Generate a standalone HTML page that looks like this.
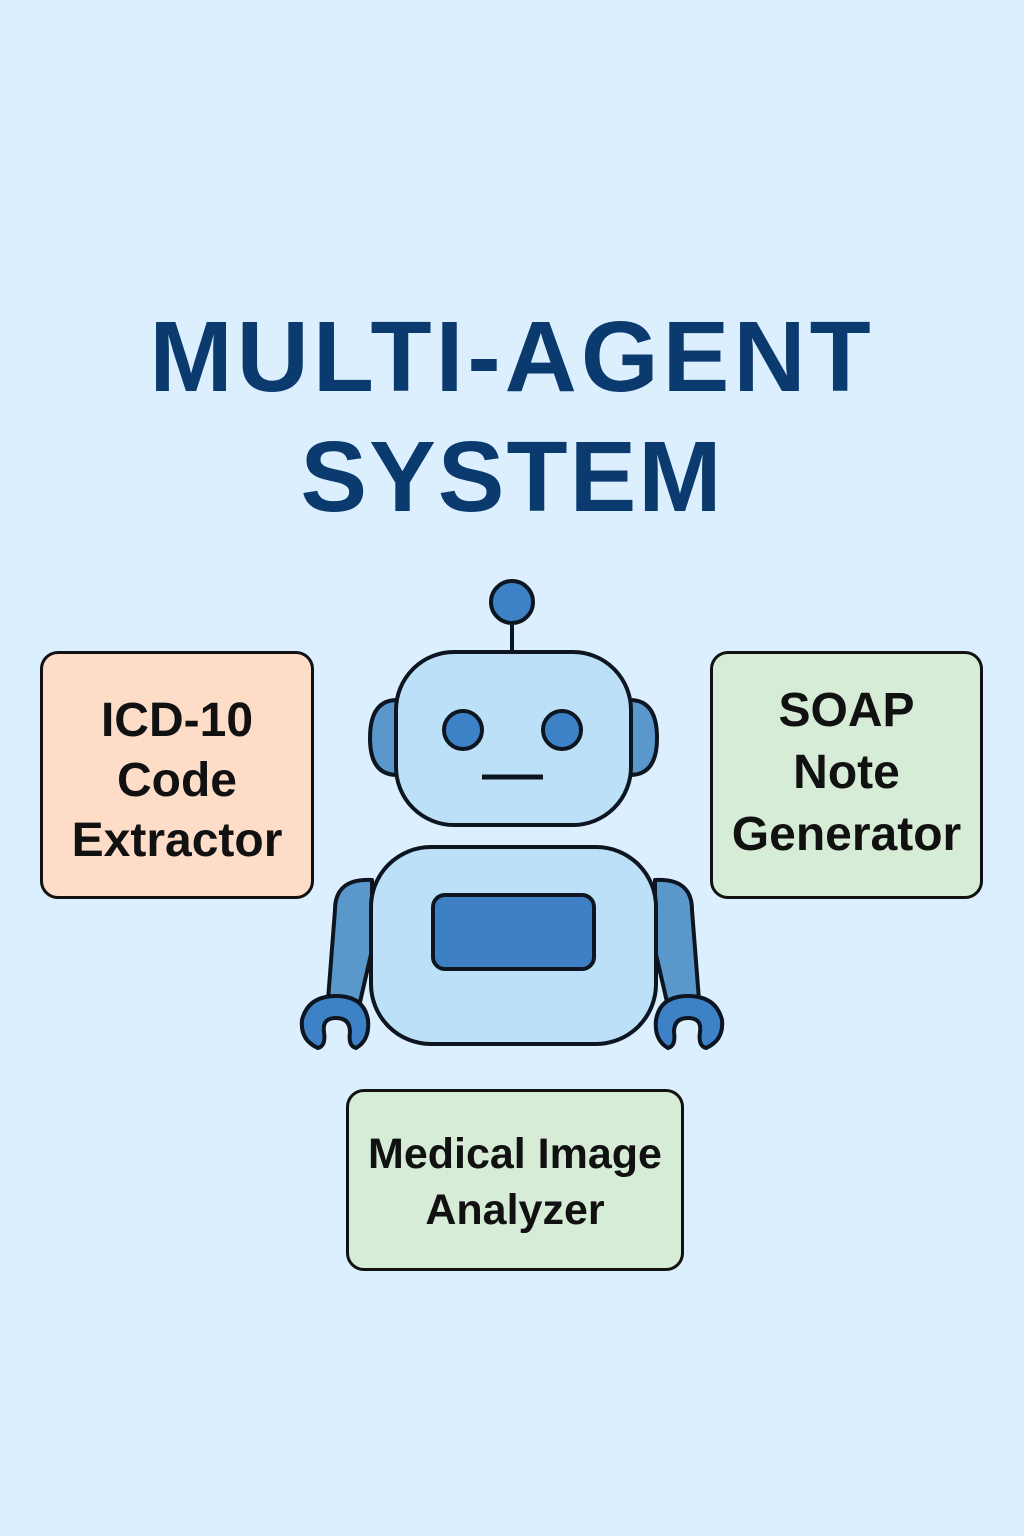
<!DOCTYPE html>
<html><head><style>
body{margin:0;width:1024px;height:1536px;background:#dcefff;font-family:"Liberation Sans",sans-serif;position:relative;overflow:hidden}
.t{position:absolute;left:0;width:1024px;text-align:center;color:#0b3a6f;font-weight:bold;font-size:100px;letter-spacing:4px;line-height:1}
.box{position:absolute;border:3px solid #111;border-radius:18px;box-sizing:border-box;display:flex;align-items:center;justify-content:center;text-align:center;font-weight:bold;color:#111;white-space:nowrap}
</style></head><body>
<div class="t" style="top:307px">MULTI-AGENT</div>
<div class="t" style="top:427px;letter-spacing:2px">SYSTEM</div>
<div class="box" style="left:40px;top:651px;width:274px;height:248px;background:#fddcc8;font-size:48px;line-height:60px;padding-top:12px">ICD-10<br>Code<br>Extractor</div>
<div class="box" style="left:710px;top:651px;width:273px;height:248px;background:#d6ecd6;font-size:48px;line-height:62px;padding-bottom:4px">SOAP<br>Note<br>Generator</div>
<div class="box" style="left:346px;top:1089px;width:338px;height:182px;background:#d6ecd6;font-size:43px;line-height:56px;padding-top:4px">Medical Image<br>Analyzer</div>
<svg style="position:absolute;left:0;top:0" width="1024" height="1536" stroke="#0d1620" stroke-width="4" stroke-linejoin="round">
<line x1="512" y1="622" x2="512" y2="652" stroke-width="4"/>
<circle cx="512" cy="602" r="21" fill="#3d82c6"/>
<path d="M397 700 Q370 700 370 738 Q370 775 397 775 Z" fill="#5a98cc"/>
<path d="M630 700 Q657 700 657 738 Q657 775 630 775 Z" fill="#5a98cc"/>
<rect x="396" y="652" width="235" height="173" rx="58" fill="#bce0f8"/>
<circle cx="463" cy="730" r="19" fill="#3d82c6"/>
<circle cx="562" cy="730" r="19" fill="#3d82c6"/>
<line x1="482" y1="777" x2="543" y2="777" stroke-width="5"/>
<path d="M372 880 Q335 878 335 910 L328 1000 L360 1002 L372 950 Z" fill="#5a98cc"/>
<path d="M655 880 Q692 878 692 910 L699 1000 L667 1002 L655 950 Z" fill="#5a98cc"/>
<rect x="371" y="847" width="285" height="197" rx="60" fill="#bce0f8"/>
<rect x="433" y="895" width="161" height="74" rx="12" fill="#3d80c4"/>
<path d="M318 1048 Q300 1040 302 1020 Q308 996 336 996 Q364 996 368 1020 Q370 1040 356 1048 Q348 1046 350 1032 Q350 1018 336 1018 Q322 1018 324 1032 Q326 1046 318 1048 Z" fill="#3d82c6"/>
<path d="M706 1048 Q724 1040 722 1020 Q716 996 688 996 Q660 996 656 1020 Q654 1040 668 1048 Q676 1046 674 1032 Q674 1018 688 1018 Q702 1018 700 1032 Q698 1046 706 1048 Z" fill="#3d82c6"/>
</svg>
</body></html>
